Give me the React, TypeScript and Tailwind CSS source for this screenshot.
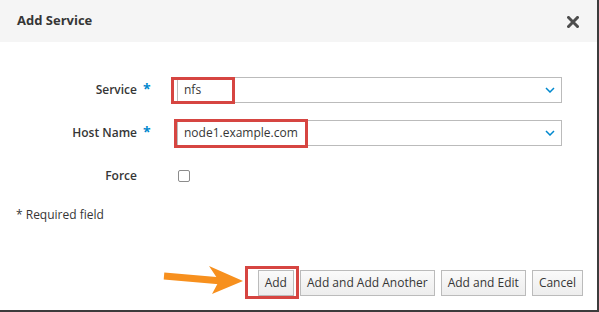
import React from "react";

const font = { fontFamily: '"Open Sans", "Liberation Sans", sans-serif' };

function Chevron() {
  return (
    <svg width="10" height="6" viewBox="0 0 10 6" className="block">
      <path d="M1 1 L5 5 L9 1" fill="none" stroke="#0088ce" strokeWidth="1.5" />
    </svg>
  );
}

function Select({ value }: { value: string }) {
  return (
    <div className="flex h-[26px] w-[385px] items-center justify-between border border-[#bbbbbb] bg-white pl-[6px] pr-[6px] text-[12px] text-[#363636]">
      <span>{value}</span>
      <Chevron />
    </div>
  );
}

function Btn({ children }: { children: React.ReactNode }) {
  return (
    <div className="flex h-[26px] items-center border border-[#bbbbbb] bg-gradient-to-b from-[#fafafa] to-[#ededed] px-[6px] text-[12px] text-[#363636]">
      {children}
    </div>
  );
}

export default function App() {
  return (
    <div
      className="relative flex h-[312px] w-[599px] flex-col overflow-hidden border-b-2 border-r-2 border-[#3c3c3c] bg-white"
      style={font}
    >
      <div className="flex h-[42px] shrink-0 items-center justify-between bg-[#f5f5f5] pl-[17px] pr-[18px]">
        <span className="text-[13px] font-bold text-[#363636]">Add Service</span>
        <svg width="12" height="12" viewBox="0 0 12 12" className="mt-[1px]">
          <path d="M1.5 1.5 L10.5 10.5 M10.5 1.5 L1.5 10.5" stroke="#4d4d4d" strokeWidth="3" strokeLinecap="square" />
        </svg>
      </div>

      <div className="mt-[35px] grid grid-cols-[137px_40px_1fr] items-center gap-y-[17px] text-[12px] text-[#363636]">
        <div className="flex h-[26px] items-center justify-end font-semibold">Service</div>
        <div className="pl-[6px] text-[14px] font-bold leading-none text-[#0088ce]">
          <span className="relative -top-[1px]">*</span>
        </div>
        <Select value="nfs" />

        <div className="flex h-[26px] items-center justify-end font-semibold">Host Name</div>
        <div className="pl-[6px] text-[14px] font-bold leading-none text-[#0088ce]">
          <span className="relative -top-[1px]">*</span>
        </div>
        <Select value="node1.example.com" />

        <div className="flex h-[26px] items-center justify-end font-semibold">Force</div>
        <div />
        <div className="flex h-[26px] items-center pl-[1px]">
          <div className="h-[12px] w-[12px] rounded-[2px] border border-[#8c8c8c] bg-white" />
        </div>
      </div>

      <div className="mt-[17px] pl-[16px] text-[12px] text-[#363636]">* Required field</div>

      <div className="mt-auto mb-[14px] flex justify-end gap-[6px] pr-[14px]">
        <Btn>Add</Btn>
        <Btn>Add and Add Another</Btn>
        <Btn>Add and Edit</Btn>
        <Btn>Cancel</Btn>
      </div>

      {/* annotation overlays */}
      <div className="absolute left-[171px] top-[77px] h-[27px] w-[64px] border-[3px] border-[#d64541]" />
      <div className="absolute left-[174px] top-[119px] h-[29px] w-[134px] border-[3px] border-[#d64541]" />
      <div className="absolute left-[245px] top-[266px] h-[33px] w-[54px] border-[3px] border-[#d64541]" />
      <svg className="absolute left-0 top-0" width="599" height="312" viewBox="0 0 599 312">
        <path d="M164 276 L222 281" stroke="#f7901e" strokeWidth="7" />
        <polygon points="209,266 243,281 212,294 219,281" fill="#f7901e" />
      </svg>
    </div>
  );
}
